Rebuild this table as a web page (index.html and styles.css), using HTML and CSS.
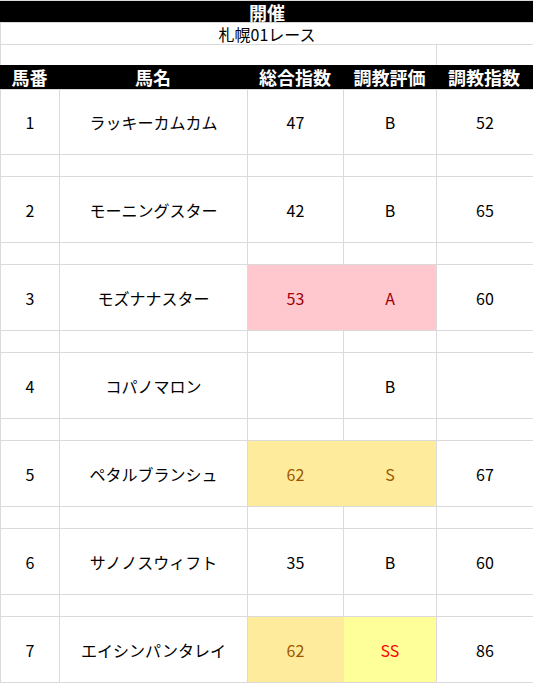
FILE: index.html
```html
<!DOCTYPE html>
<html lang="ja">
<head>
<meta charset="utf-8">
<link rel="stylesheet" href="styles.css">
</head>
<body>
<div class="sheet">
  <div class="cell title span-all">開催</div>
  <div class="cell sub span-all">札幌01レース</div>
  <div class="cell span-4"></div>
  <div class="cell"></div>
  <div class="head span-all">
    <div>馬番</div><div>馬名</div><div>総合指数</div><div>調教評価</div><div>調教指数</div>
  </div>

  <div class="cell">1</div><div class="cell">ラッキーカムカム</div><div class="cell">47</div><div class="cell">B</div><div class="cell">52</div>
  <div class="cell"></div><div class="cell"></div><div class="cell"></div><div class="cell"></div><div class="cell"></div>

  <div class="cell">2</div><div class="cell">モーニングスター</div><div class="cell">42</div><div class="cell">B</div><div class="cell">65</div>
  <div class="cell"></div><div class="cell"></div><div class="cell"></div><div class="cell"></div><div class="cell"></div>

  <div class="cell">3</div><div class="cell">モズナナスター</div><div class="cell bad join">53</div><div class="cell bad">A</div><div class="cell">60</div>
  <div class="cell"></div><div class="cell"></div><div class="cell"></div><div class="cell"></div><div class="cell"></div>

  <div class="cell">4</div><div class="cell">コパノマロン</div><div class="cell"></div><div class="cell">B</div><div class="cell"></div>
  <div class="cell"></div><div class="cell"></div><div class="cell"></div><div class="cell"></div><div class="cell"></div>

  <div class="cell">5</div><div class="cell">ペタルブランシュ</div><div class="cell neutral join">62</div><div class="cell neutral">S</div><div class="cell">67</div>
  <div class="cell"></div><div class="cell"></div><div class="cell"></div><div class="cell"></div><div class="cell"></div>

  <div class="cell">6</div><div class="cell">サノノスウィフト</div><div class="cell">35</div><div class="cell">B</div><div class="cell">60</div>
  <div class="cell"></div><div class="cell"></div><div class="cell"></div><div class="cell"></div><div class="cell"></div>

  <div class="cell">7</div><div class="cell">エイシンパンタレイ</div><div class="cell neutral join">62</div><div class="cell top">SS</div><div class="cell">86</div>
</div>
</body>
</html>
```

FILE: styles.css
```css
html, body {
  margin: 0;
  padding: 0;
  background: #ffffff;
}

.sheet {
  display: grid;
  grid-template-columns: 58px 187px 95px 92px 96px;
  grid-template-rows: 21px 21px 20px 23px 64px 21px 65px 21px 65px 21px 65px 21px 65px 21px 65px 21px 65px;
  gap: 1px;
  padding: 1px 0 1px 1px;
  width: 533px;
  box-sizing: border-box;
  background: #dadada;
  font-family: "Noto Sans CJK JP", "Noto Sans", sans-serif;
  font-size: 16px;
  color: #000;
}

.cell {
  background: #ffffff;
  display: flex;
  align-items: center;
  justify-content: center;
  line-height: 1;
  white-space: nowrap;
}

.span-all {
  grid-column: 1 / -1;
}

.span-4 {
  grid-column: 1 / 5;
}

.title {
  background: #000;
  color: #fff;
  font-weight: bold;
  font-size: 18px;
  margin: 0 -1px 0 -1px;
}

.sub {
  font-size: 16px;
}

.head {
  display: grid;
  grid-template-columns: 59px 188px 96px 93px 96px;
  background: #000;
  color: #fff;
  font-weight: bold;
  font-size: 18px;
  margin: -1px 0 0 -1px;
}

.head > div {
  display: flex;
  align-items: center;
  justify-content: center;
  line-height: 1;
  white-space: nowrap;
}

.bad {
  background: #ffc7ce;
  color: #9c0006;
}

.bad.join {
  box-shadow: 1px 0 0 #ffc7ce;
}

.neutral {
  background: #ffeb9c;
  color: #9c5700;
}

.neutral.join {
  box-shadow: 1px 0 0 #ffeb9c;
}

.top {
  background: #ffff99;
  color: #ff0000;
}
```
